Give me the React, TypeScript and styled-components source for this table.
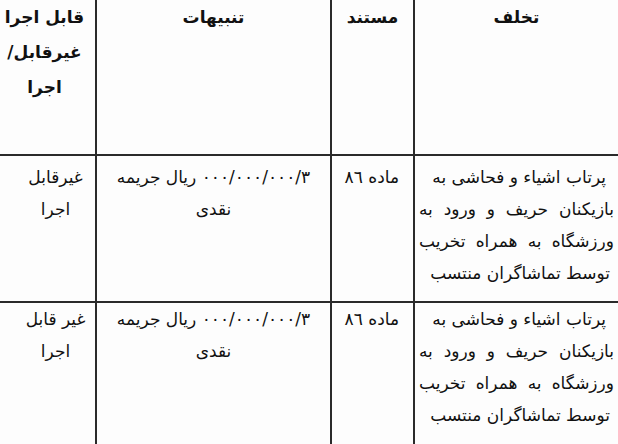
import React from 'react';
import styled, { createGlobalStyle } from 'styled-components';

const GlobalStyle = createGlobalStyle`
  html,
  body {
    margin: 0;
    padding: 0;

    overflow: hidden;

    background-color: #fdfdfd;
  }
`;

const Table = styled.div`
  width: 618px;

  display: grid;
  grid-template-columns: 205px 83px 235px 95px;
  grid-template-rows: 154px 147px 147px;

  direction: rtl;

  font-family: 'DejaVu Sans', sans-serif;
  color: #111111;
`;

const Cell = styled.div<{
  $last?: boolean;
  $top?: boolean;
  $align?: string;
  $padTop?: number;
  $padLeft?: number;
  $padRight?: number;
}>`
  box-sizing: border-box;
  padding-top: ${(props) => props.$padTop ?? 0}px;
  padding-left: ${(props) => props.$padLeft ?? 0}px;
  padding-right: ${(props) => props.$padRight ?? 0}px;

  text-align: ${(props) => props.$align ?? 'center'};

  border-left: ${(props) => (props.$last ? 'none' : '2px solid #2a2a2a')};
  border-top: ${(props) => (props.$top ? '2px solid #2a2a2a' : 'none')};
`;

const HeaderCell = styled(Cell)`
  font-size: 17px;
  font-weight: 700;
  line-height: 35px;
`;

const BodyCell = styled(Cell)`
  font-size: 17px;
  line-height: 32px;
`;

const Line = styled.span<{ $justify?: boolean; $inset?: [number, number] }>`
  display: block;
  padding-left: ${(props) => (props.$inset ? props.$inset[0] : 0)}px;
  padding-right: ${(props) => (props.$inset ? props.$inset[1] : 0)}px;

  white-space: nowrap;

  ${(props) =>
    props.$justify &&
    `
    text-align: justify;
    text-align-last: justify;
  `}
`;

// the scan shows the amount with its groups in right-to-left order
const Amount = styled.span`
  direction: rtl;
  unicode-bidi: bidi-override;
`;

const offence: { text: string; inset: [number, number] }[] = [
  { text: 'پرتاب اشیاء و فحاشی به', inset: [17, 8] },
  { text: 'بازیکنان حریف و ورود به', inset: [0, 0] },
  { text: 'ورزشگاه به همراه تخریب', inset: [0, 0] },
  { text: 'توسط تماشاگران منتسب', inset: [17, 4] },
];

const rows = [
  { padTop: 5, status: ['غیرقابل', 'اجرا'] },
  { padTop: 0, status: ['غیر قابل', 'اجرا'] },
];

export default function App() {
  return (
    <>
      <GlobalStyle />
      <Table>
        <HeaderCell>تخلف</HeaderCell>
        <HeaderCell>مستند</HeaderCell>
        <HeaderCell>تنبیهات</HeaderCell>
        <HeaderCell $last $padRight={6}>
          <Line>قابل اجرا</Line>
          <Line>غیرقابل/</Line>
          <Line>اجرا</Line>
        </HeaderCell>

        {rows.map((row, index) => (
          <React.Fragment key={index}>
            <BodyCell $top $padTop={row.padTop} $padLeft={4} $padRight={4}>
              {offence.map((line) => (
                <Line key={line.text} $justify $inset={line.inset}>
                  {line.text}
                </Line>
              ))}
            </BodyCell>
            <BodyCell $top $padTop={row.padTop} $align="right" $padRight={14}>
              <Line>ماده ٨٦</Line>
            </BodyCell>
            <BodyCell $top $padTop={row.padTop}>
              <Line>
                <Amount>٣/٠٠٠/٠٠٠/٠٠٠</Amount> ریال جریمه
              </Line>
              <Line>نقدی</Line>
            </BodyCell>
            <BodyCell $top $last $padTop={row.padTop} $padLeft={16}>
              {row.status.map((text) => (
                <Line key={text}>{text}</Line>
              ))}
            </BodyCell>
          </React.Fragment>
        ))}
      </Table>
    </>
  );
}
